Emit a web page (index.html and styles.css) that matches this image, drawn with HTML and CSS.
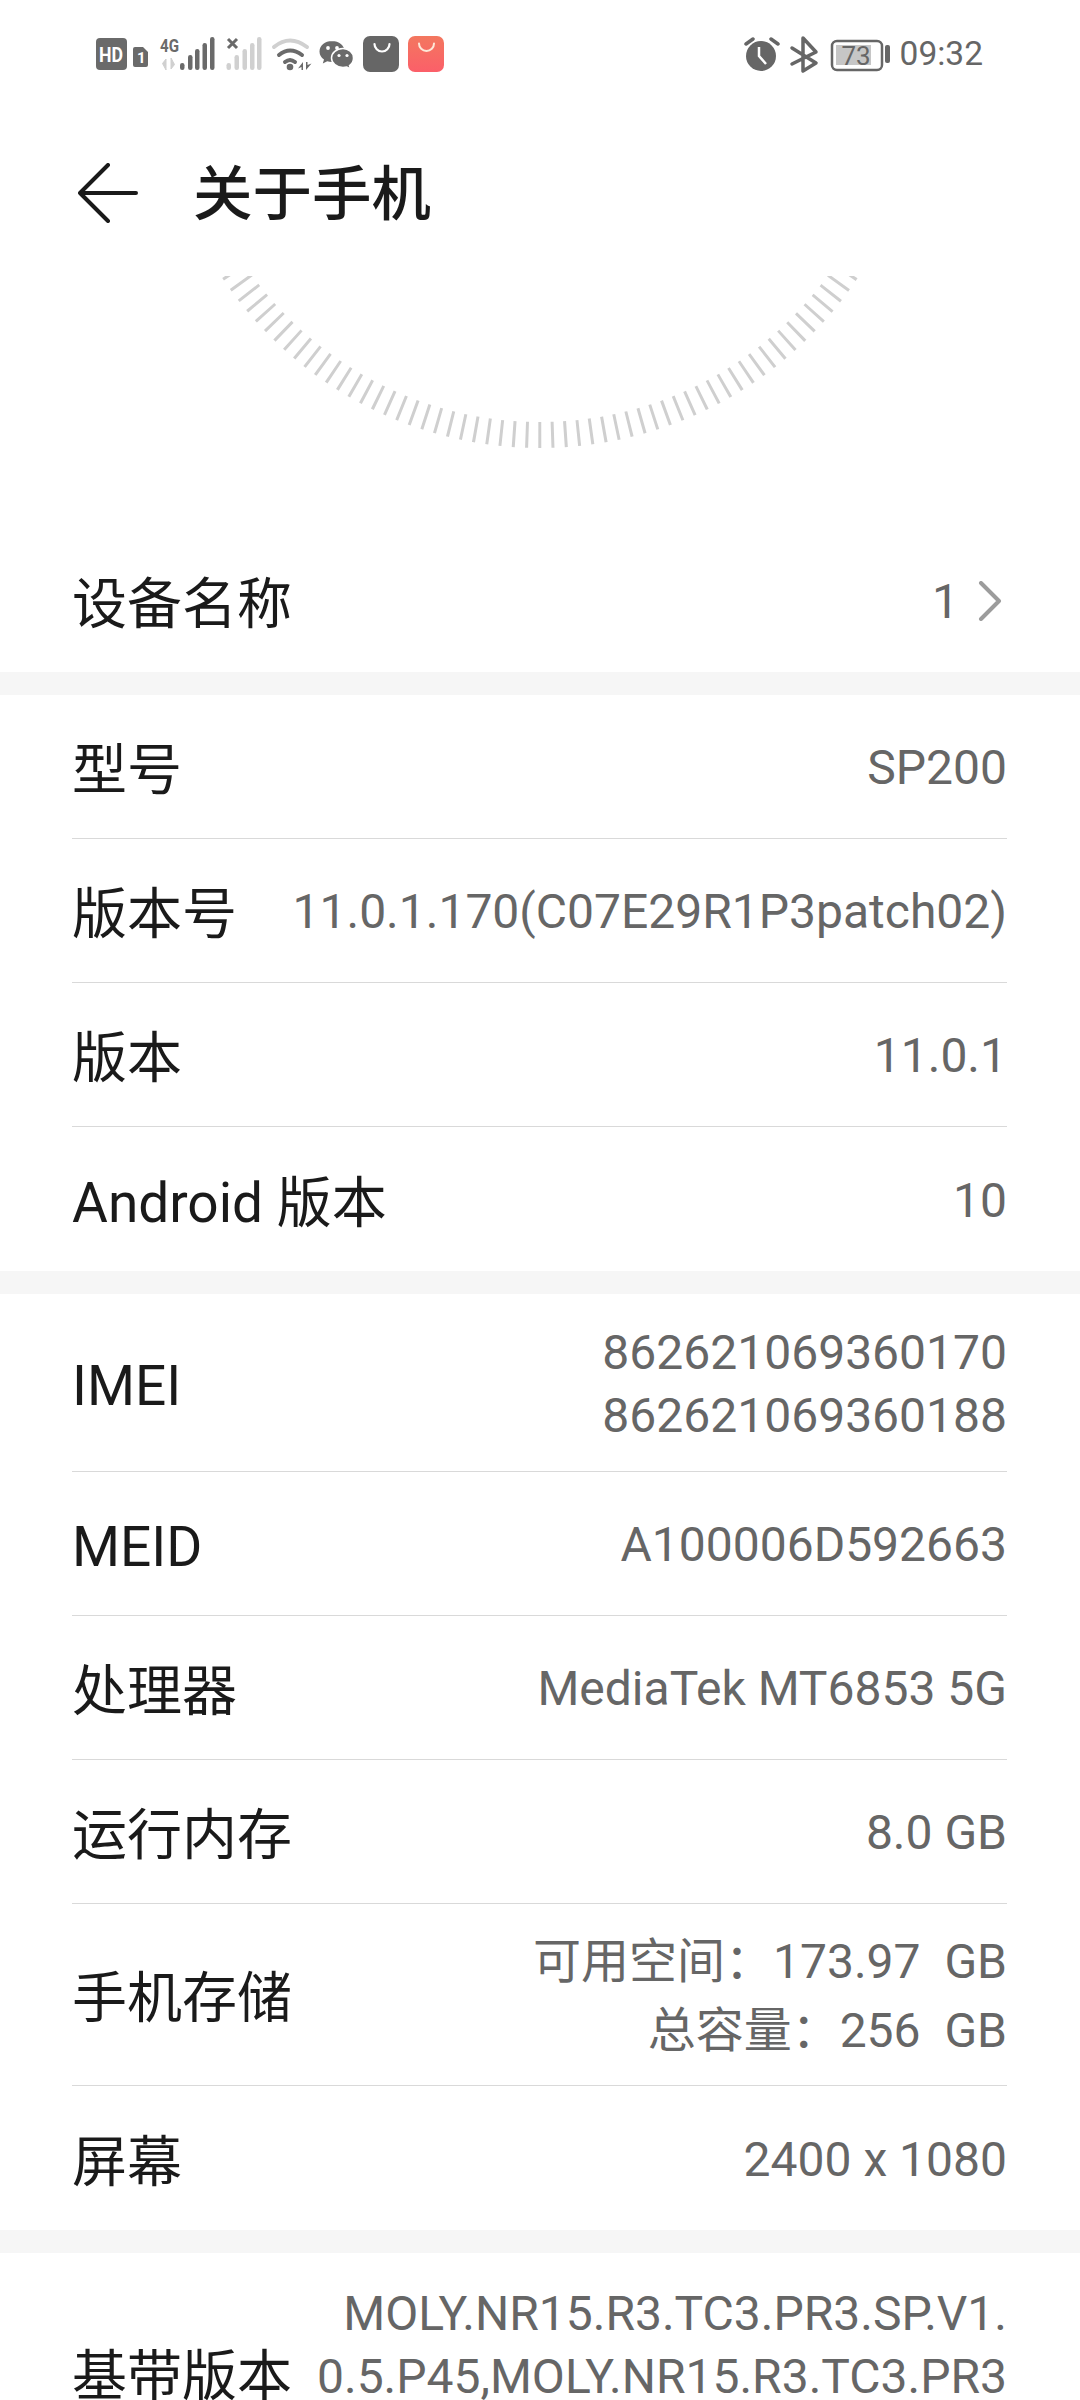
FILE: index.html
```html
<!DOCTYPE html>
<html lang="zh-CN">
    <head>
        <meta charset="utf-8">
        <title>关于手机</title>
        <link rel="stylesheet" href="styles.css">
    </head>
    <body>
        <div class="statusbar">
            <svg class="notify" width="348" height="60" viewBox="96 24 348 60">
                <rect x="96" y="38" width="31" height="32" rx="4" fill="#6a6a6a"/>
                <text x="99" y="62" class="tiny" font-size="21" fill="#fff" textLength="24" lengthAdjust="spacingAndGlyphs">HD</text>
                <path d="M135 47h8l5 5v13a2 2 0 0 1-2 2h-11a2 2 0 0 1-2-2v-16a2 2 0 0 1 2-2z" fill="#6a6a6a"/>
                <text x="137" y="63" class="tiny" font-size="15" fill="#fff">1</text>

                <text x="160" y="52" class="tiny" font-size="19" fill="#6a6a6a" textLength="19" lengthAdjust="spacingAndGlyphs">4G</text>
                <path d="M166 70v-11l-3.500 4.500zM171 58v11l3.500-4.500z" fill="#d0d0d0" stroke="#d0d0d0"/>
                <rect x="180" y="63" width="4.500" height="7" rx="2.200" fill="#6a6a6a"/>
                <rect x="188" y="55" width="4.500" height="15" rx="2.200" fill="#6a6a6a"/>
                <rect x="195" y="49" width="4.500" height="21" rx="2.200" fill="#6a6a6a"/>
                <rect x="202.500" y="43" width="4.500" height="27" rx="2.200" fill="#6a6a6a"/>
                <rect x="210" y="37" width="4.500" height="33" rx="2.200" fill="#6a6a6a"/>

                <path d="M228 39l9 9M237 39l-9 9" stroke="#6a6a6a" stroke-width="3" fill="none"/>
                <rect x="226.500" y="63" width="4.500" height="7" rx="2.200" fill="#d0d0d0"/>
                <rect x="234.500" y="55" width="4.500" height="15" rx="2.200" fill="#d0d0d0"/>
                <rect x="242.500" y="49" width="4.500" height="21" rx="2.200" fill="#d0d0d0"/>
                <rect x="250" y="43" width="4.500" height="27" rx="2.200" fill="#d0d0d0"/>
                <rect x="257" y="37" width="4.500" height="33" rx="2.200" fill="#d0d0d0"/>

                <path d="M274 47q16-13 33 0" stroke="#d0d0d0" stroke-width="4" fill="none" stroke-linecap="round"/>
                <path d="M279 55q11-9 23 0" stroke="#6a6a6a" stroke-width="4" fill="none" stroke-linecap="round"/>
                <path d="M285 62q5-4 10 0" stroke="#6a6a6a" stroke-width="4" fill="none" stroke-linecap="round"/>
                <circle cx="290" cy="67" r="3.300" fill="#6a6a6a"/>
                <path d="M303 62v8h-1.500v-3l-3.500 1.500zM306 70v-8h1.500v3l4 -1.500z" fill="#6a6a6a"/>

                <path d="M332 41c-7 0-12.500 4.600-12.500 10.500 0 3.300 1.700 6.200 4.500 8.100l-1.200 4 4.400-2.300c1.500.4 3 .7 4.800.7 7 0 12.500-4.600 12.500-10.500s-5.500-10.500-12.500-10.500z" fill="#6a6a6a"/>
                <path d="M343 48.500c-6.500 0-11.500 4.300-11.500 9.500s5 9.500 11.500 9.500c1.300 0 2.600-.2 3.800-.5l3.700 2-1-3.500c2.600-1.800 4-4.500 4-7.500 0-5.200-5-9.500-10.500-9.500z" fill="#6a6a6a" stroke="#fff" stroke-width="1.500"/>
                <circle cx="328" cy="48" r="1.900" fill="#fff"/>
                <circle cx="337" cy="48" r="1.900" fill="#fff"/>
                <circle cx="339" cy="55.500" r="1.600" fill="#fff"/>
                <circle cx="347" cy="55.500" r="1.600" fill="#fff"/>

                <rect x="363" y="36" width="36" height="36" rx="7" fill="#666"/>
                <path d="M374.500 44a7.500 7.500 0 0 0 15 0" stroke="#fff" stroke-width="2.200" fill="none" stroke-linecap="round"/>
                <defs>
                    <linearGradient id="shop" x1="0" y1="0" x2="0" y2="1">
                        <stop offset="0" stop-color="#f3775f"/>
                        <stop offset="1" stop-color="#fb5f69"/>
                    </linearGradient>
                </defs>
                <rect x="408" y="36" width="36" height="36" rx="7" fill="url(#shop)"/>
                <path d="M419 43.500a7.500 7.500 0 0 0 15 0" stroke="#fde8d8" stroke-width="2" fill="none" stroke-linecap="round"/>
            </svg>
            <div class="status-right">
                <svg width="146" height="60" viewBox="743 24 146 60">
                    <circle cx="760" cy="56" r="15" fill="#666"/>
                    <path d="M758 47v9l7 8" stroke="#fff" stroke-width="2.500" fill="none"/>
                    <path d="M745 44l7-5M770 39l7 5" stroke="#666" stroke-width="3.500" stroke-linecap="round"/>
                    <path d="M791 48l24 15-13 8V38l13 14-24 12" stroke="#666" stroke-width="3.500" fill="none" stroke-linejoin="round" stroke-linecap="round"/>
                    <rect x="831" y="41" width="50" height="29" rx="5" stroke="#666" stroke-width="2.500" fill="none"/>
                    <rect x="835" y="45" width="35" height="20" fill="#c6c6c6"/>
                    <text x="855" y="65" class="batt" font-size="26" fill="#666" text-anchor="middle">73</text>
                    <rect x="884" y="45" width="5" height="18" rx="2" fill="#666"/>
                </svg>
                <span class="clock">09:32</span>
            </div>
        </div>

        <div class="titlebar">
            <svg class="back" width="60" height="60" viewBox="0 0 60 60">
                <path d="M30 2L2 30l28 28M2 30h56" stroke="#1a1a1a" stroke-width="4" fill="none" stroke-linecap="round" stroke-linejoin="round"/>
            </svg>
            <h1>关于手机</h1>
        </div>

        <svg class="dial" width="1080" height="252" viewBox="0 276 1080 252">
            <!-- dashes on a thick ring make the ticks, one every 2 degrees -->
            <circle cx="540" cy="66" r="369" fill="none" stroke="#cfcfcf" stroke-width="26" stroke-dasharray="3 9.880" stroke-dashoffset="1.500"/>
        </svg>

        <div class="group">
            <div class="row">
                <span class="label">设备名称</span>
                <span class="value value-link">1
                    <svg class="chevron" width="24" height="40" viewBox="0 0 24 40">
                        <path d="M3 2l18 18L3 38" stroke="#9c9c9c" stroke-width="4" fill="none" stroke-linecap="round" stroke-linejoin="round"/>
                    </svg>
                </span>
            </div>
        </div>

        <div class="group">
            <div class="row"><span class="label">型号</span><span class="value">SP200</span></div>
            <div class="row"><span class="label">版本号</span><span class="value">11.0.1.170(C07E29R1P3patch02)</span></div>
            <div class="row"><span class="label">版本</span><span class="value">11.0.1</span></div>
            <div class="row"><span class="label">Android 版本</span><span class="value">10</span></div>
        </div>

        <div class="group">
            <div class="row row-imei"><span class="label">IMEI</span><span class="value">862621069360170<br>862621069360188</span></div>
            <div class="row"><span class="label">MEID</span><span class="value">A100006D592663</span></div>
            <div class="row"><span class="label">处理器</span><span class="value">MediaTek MT6853 5G</span></div>
            <div class="row"><span class="label">运行内存</span><span class="value">8.0 GB</span></div>
            <div class="row row-storage"><span class="label">手机存储</span><span class="value value-pre">可用空间：173.97  GB<br>总容量：256  GB</span></div>
            <div class="row"><span class="label">屏幕</span><span class="value">2400 x 1080</span></div>
        </div>

        <div class="group">
            <div class="row row-baseband"><span class="label">基带版本</span><span class="value">MOLY.NR15.R3.TC3.PR3.SP.V1.<br>0.5.P45,MOLY.NR15.R3.TC3.PR3</span></div>
        </div>
    </body>
</html>
```

FILE: styles.css
```css
html {
    height:100%;
}

body {
    margin:0;
    height:2400px;
    overflow:hidden;
    background:#fff;
    color:#1a1a1a;
    font-family:Roboto, "Noto Sans CJK SC", sans-serif;
}

.statusbar {
    display:flex;
    justify-content:space-between;
    align-items:center;
    height:60px;
    padding:24px 97px 0 96px;
    margin-bottom:-12px;
    color:#666;
}

.status-right {
    display:flex;
    align-items:center;
    gap:10px;
}

.statusbar svg {
    display:block;
}

.tiny {
    font-family:Roboto, sans-serif;
    font-weight:700;
}

.batt {
    font-family:Roboto, sans-serif;
}

.clock {
    font-size:33.500px;
    line-height:36px;
}

.titlebar {
    display:flex;
    align-items:center;
    height:78px;
    padding:82px 0 44px 78px;
}

.back {
    display:block;
    margin-right:55px;
}

.titlebar h1 {
    margin:0;
    padding-top:3px;
    font-size:59.500px;
    font-weight:500;
    line-height:78px;
}

.dial {
    display:block;
}

.group {
    padding:0 73px 0 72px;
    border-bottom:23px solid #f6f6f6;
}

.row {
    display:flex;
    justify-content:space-between;
    align-items:center;
    gap:24px;
    min-height:143px;
    border-bottom:1px solid #d9d9d9;
}

.row:last-child {
    border-bottom:0;
    min-height:144px;
}

.row-imei {
    min-height:177px;
}

.row-storage {
    min-height:181px;
}

.row-baseband {
    align-items:flex-start;
    padding-top:27px;
}

.row-baseband .label {
    margin-top:54px;
}

.label {
    flex:none;
    padding-top:7px;
    font-size:55px;
    line-height:70px;
}

.value {
    padding-top:2px;
    font-size:48px;
    line-height:63px;
    color:#666;
    text-align:right;
}

.value-pre {
    white-space:pre;
    line-height:69px;
}

.value-link {
    display:flex;
    align-items:center;
    gap:19px;
    margin-right:5px;
}

.chevron {
    display:block;
}
```
